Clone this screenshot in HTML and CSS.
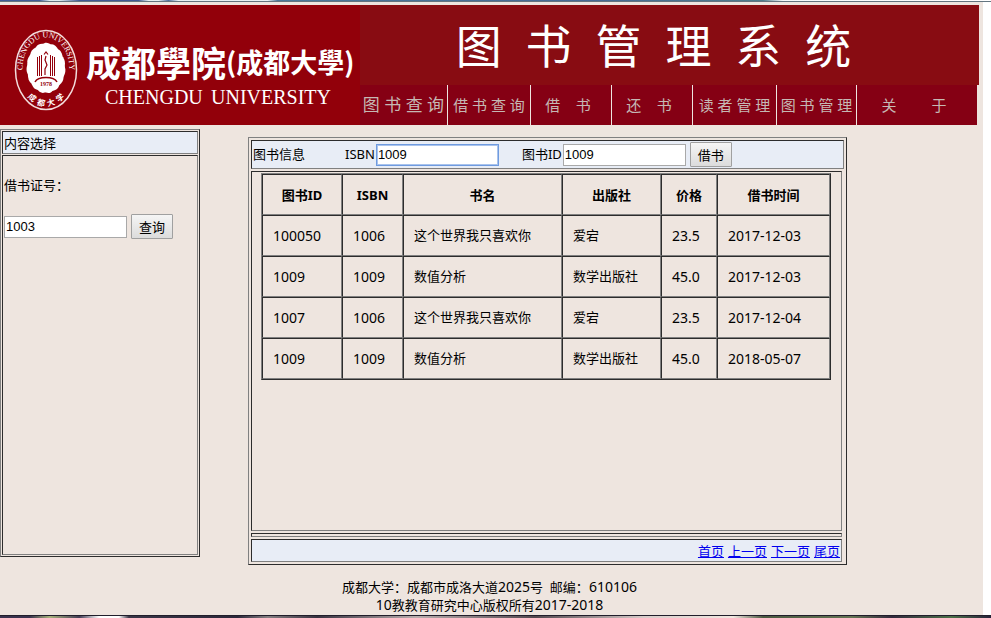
FILE: index.html
```html
<!DOCTYPE html>
<html lang="zh-CN">
<head>
<meta charset="utf-8">
<title>图书管理系统</title>
<link rel="stylesheet" href="styles.css">
</head>
<body>
<div class="strip strip-top"></div>
<div class="page">
  <header class="banner">
    <svg class="logo" viewBox="0 0 360 120" role="img" aria-label="成都学院">
      <defs>
        <path id="ring-top" d="M24 75 A23.500 31.500 0 1 1 68 75"/>
        <path id="ring-bottom" d="M20 78 A28 37 0 0 0 72 78"/>
        <path id="ray" d="M0 -15 C5 -20 9 -19 13 -13 L8 -7 Z"/>
      </defs>
      <ellipse cx="46" cy="65" rx="30.500" ry="39.500" fill="none" stroke="#f3dcdc" stroke-width="1.500"/>
      <g transform="translate(46 63) scale(1 1.300)" fill="#fff">
        <circle r="15"/>
        <use href="#ray"/><use href="#ray" transform="rotate(24)"/><use href="#ray" transform="rotate(48)"/>
        <use href="#ray" transform="rotate(72)"/><use href="#ray" transform="rotate(96)"/><use href="#ray" transform="rotate(120)"/>
        <use href="#ray" transform="rotate(144)"/><use href="#ray" transform="rotate(168)"/><use href="#ray" transform="rotate(192)"/>
        <use href="#ray" transform="rotate(216)"/><use href="#ray" transform="rotate(240)"/><use href="#ray" transform="rotate(264)"/>
        <use href="#ray" transform="rotate(288)"/><use href="#ray" transform="rotate(312)"/><use href="#ray" transform="rotate(336)"/>
      </g>
      <text class="seal-latin"><textPath href="#ring-top" startOffset="50%" text-anchor="middle">CHENGDU UNIVERSITY</textPath></text>
      <text class="seal-han"><textPath href="#ring-bottom" startOffset="50%" text-anchor="middle">成&#160; 都&#160; 大&#160; 学</textPath></text>
      <g fill="none" stroke="#92000a">
        <path d="M37.500 52V71M39.500 51V71M41.500 50V71M50.500 50V71M52.500 51V71M54.500 52V71"/>
        <path d="M44 49.500L46 47L48 49.500M46 51L45 55L47 60L45 64V70" stroke-width="1.200"/>
        <path d="M35 77C38 71 54 71 57 77" stroke-width="1.500"/>
      </g>
      <text class="seal-year" x="46" y="81" text-anchor="middle">1978</text>
      <text class="logo-han" x="86" y="72">成都學院</text>
      <text class="logo-han-small" x="226" y="68">(成都大學)</text>
      <text class="logo-latin" x="105" y="99">CHENGDU</text>
      <text class="logo-latin" x="211" y="99">UNIVERSITY</text>
    </svg>
    <div class="banner-main">
      <h1 class="title">图  书  管  理  系  统</h1>
      <nav class="nav">
        <a class="nav-books" href="#">图 书 查 询</a>
        <a href="#">借 书 查 询</a>
        <a class="wide" href="#">借    书</a>
        <a class="wide" href="#">还    书</a>
        <a href="#">读 者 管 理</a>
        <a href="#">图 书 管 理</a>
        <a class="wide" href="#">关         于</a>
      </nav>
    </div>
  </header>
  <div class="content">
    <aside class="panel sidebar">
      <div class="cell tinted">内容选择</div>
      <form class="cell card-form">
        <label for="card">借书证号：</label>
        <div class="row"><input id="card" class="field" type="text" value="1003"><button class="btn" type="button">查询</button></div>
      </form>
    </aside>
    <main class="panel main">
      <form class="cell tinted book-form">
        <span class="book-heading">图书信息</span>
        <label for="isbn">ISBN</label><input id="isbn" class="field active" type="text" value="1009">
        <label class="book-id" for="bookid">图书ID</label><input id="bookid" class="field" type="text" value="1009">
        <button class="btn" type="button">借书</button>
      </form>
      <div class="cell inner records">
        <table class="data">
          <colgroup><col class="c-id"><col class="c-isbn"><col class="c-name"><col class="c-press"><col class="c-price"><col class="c-date"></colgroup>
          <thead><tr><th>图书ID</th><th>ISBN</th><th>书名</th><th>出版社</th><th>价格</th><th>借书时间</th></tr></thead>
          <tbody>
            <tr><td class="num">100050</td><td class="num">1006</td><td>这个世界我只喜欢你</td><td>爱宕</td><td class="num">23.5</td><td class="num date">2017-12-03</td></tr>
            <tr><td class="num">1009</td><td class="num">1009</td><td>数值分析</td><td>数学出版社</td><td class="num">45.0</td><td class="num date">2017-12-03</td></tr>
            <tr><td class="num">1007</td><td class="num">1006</td><td>这个世界我只喜欢你</td><td>爱宕</td><td class="num">23.5</td><td class="num date">2017-12-04</td></tr>
            <tr><td class="num">1009</td><td class="num">1009</td><td>数值分析</td><td>数学出版社</td><td class="num">45.0</td><td class="num date">2018-05-07</td></tr>
          </tbody>
        </table>
      </div>
      <div class="cell inner spacer"></div>
      <div class="cell inner tinted pager"><a href="#">首页</a><a href="#">上一页</a><a href="#">下一页</a><a href="#">尾页</a></div>
    </main>
  </div>
  <footer class="footer">
    <div>成都大学：成都市成洛大道<span class="num">2025</span>号&nbsp; 邮编：<span class="num">610106</span></div>
    <div><span class="num">10</span>教教育研究中心版权所有<span class="num">2017-2018</span></div>
  </footer>
</div>
<div class="strip strip-bottom"></div>
</body>
</html>
```
FILE: styles.css
```css
* { box-sizing: border-box; }

body {
  margin: 0;
  min-height: 100vh;
  display: flex;
  flex-direction: column;
  background: #fff;
  color: #000;
  font: 13px/19px "Noto Sans", "Noto Sans CJK SC", sans-serif;
}

.num { font-size: 14px; }

.strip { flex: none; }

.strip-top {
  height: 2px;
  border-bottom: 1px solid #64757f;
  background: linear-gradient(90deg, #3f5c96 0, #3f5c96 4%, #dceef0 5%, #dceef0 6%, #3f5a93 8%, #3f5a93 14%, #e4f0f2 15%, #e4f0f2 16%, #4d6f9c 17%, #e6f2f5 18%, #e6f2f5 27%, #4b7899 28%, #466a94 60%, #4f7d8c 77%, #f4fafb 79%, #fff 100%);
}

.strip-bottom {
  height: 3px;
  border-top: 1px solid #211e2b;
  background: linear-gradient(90deg, #39324d 0, #39324d 3%, #a7b37d 5%, #433c55 8%, #fff 10%, #fff 12%, #393546 13%, #2c283a 24%, #857f82 27%, #37313f 32%, #b9aeae 42%, #51474e 54%, #d8ccca 65%, #f1e7e0 74%, #4b5941 77%, #647454 86%, #32293c 90%, #4b7048 96%, #27213a 100%);
}

.page {
  flex: 1;
  margin-right: 8px;
  padding: 3px 4px 0 0;
  background: #eee5df;
}

.banner {
  display: flex;
  height: 120px;
  background: #92000a;
}

.logo { flex: none; width: 360px; height: 120px; }
.logo text { fill: #fff; }
.seal-latin { font: 8px "Liberation Serif", serif; }
.seal-han { font: bold 8px "Noto Sans CJK SC", sans-serif; }
.logo .seal-year { font: bold 6px "Liberation Serif", serif; fill: #92000a; }
.logo-han { font: bold 35px "Noto Sans CJK TC", sans-serif; }
.logo-han-small { font: bold 27px "Noto Sans CJK TC", sans-serif; }
.logo-latin { font: 20px "Liberation Serif", serif; }

.banner-main { flex: 1; display: flex; flex-direction: column; }

.title {
  margin: 0;
  height: 80px;
  padding-right: 32px;
  background: #880c12;
  color: #fff;
  font-size: 46px;
  font-weight: 400;
  line-height: 80px;
  text-align: center;
  white-space: pre;
}

.nav {
  display: grid;
  grid-template-columns: 88fr 83fr 81fr 81fr 84fr 80fr 120fr;
  flex: 1;
  padding-right: 2px;
  background: #eee5df;
}

.nav a {
  border-right: 1px solid #eee5df;
  background: #850014;
  color: #c6b8b4;
  font-size: 15px;
  line-height: 40px;
  text-align: center;
  text-decoration: none;
  white-space: pre;
}

.nav .nav-books { font-size: 17px; }
.nav .wide { padding-right: 6px; }
.nav a:last-child { border-right: 0; }

.content { display: flex; align-items: flex-start; gap: 48px; padding-top: 4px; }

.panel {
  display: flex;
  flex-direction: column;
  min-height: 428px;
  border: 1px solid;
  border-color: #808080 #2c2c2c #2c2c2c #808080;
}

.cell {
  border: 1px solid;
  border-color: #2c2c2c #808080 #808080 #2c2c2c;
  padding: 1px;
}

.tinted { background: #e8edf6; }

.sidebar { flex: 0 0 200px; padding: 1px; gap: 1px; }
.sidebar .tinted, .pager { padding: 2px 1px 0; }
.card-form { flex: 1; padding-top: 20px; }
.card-form label { display: block; margin-bottom: 19px; }
.row { display: flex; align-items: center; gap: 4px; }

.main { flex: 0 0 599px; margin-top: 8px; padding: 2px; gap: 2px; }
.inner { margin-right: 2px; }

.book-form { display: flex; align-items: center; }
.book-form .field { margin-left: 1px; }
.book-heading { margin-right: 40px; }
.book-id { margin-left: 23px; }
.book-form .btn { margin-left: 4px; }

.field {
  width: 123px;
  height: 22px;
  padding: 1px;
  border: 1px solid #a9a9a9;
  background: #fff;
  color: #000;
  font: 13px "Liberation Sans", sans-serif;
}

.field.active { border-color: #6f9be0; outline: 1px solid #a9c3ec; outline-offset: -2px; }

.btn {
  width: 42px;
  height: 25px;
  padding: 0;
  border: 1px solid #a0a0a0;
  border-radius: 1px;
  background: linear-gradient(#f5f5f5, #dcdcdc);
  color: #000;
  font: 13px "Noto Sans CJK SC", sans-serif;
}

.records { flex: 1; padding-left: 9px; }

.data {
  width: 570px;
  table-layout: fixed;
  border: 1px solid;
  border-color: #808080 #2c2c2c #2c2c2c #808080;
  border-spacing: 0;
}

.data th, .data td {
  height: 41px;
  padding: 0 10px;
  border: 1px solid;
  border-color: #2c2c2c #808080 #808080 #2c2c2c;
  text-align: left;
}

.data th { padding-top: 2px; text-align: center; }
.c-id { width: 80px; }
.c-isbn { width: 61px; }
.c-name { width: 159px; }
.c-press { width: 99px; }
.c-price { width: 56px; }

.spacer { height: 4px; padding: 0; }
.pager { display: flex; justify-content: flex-end; gap: 4px; }
.pager a { color: #0000ee; }

.footer { padding-top: 13px; line-height: 18px; text-align: center; }
```
